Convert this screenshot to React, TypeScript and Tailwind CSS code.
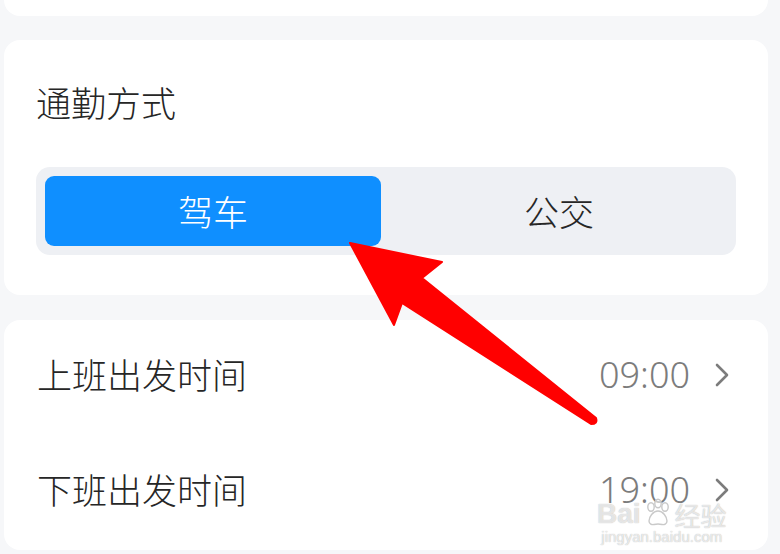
const rows = [
  { label: "上班出发时间", value: "09:00" },
  { label: "下班出发时间", value: "19:00" },
];

const font = "font-['Noto_Sans_CJK_SC','Noto_Sans',sans-serif]";

function Chevron() {
  return (
    <svg className="h-[26px] w-[16px]" viewBox="0 0 16 26" fill="none" stroke="#7c7c7c" strokeWidth={2.6} strokeLinecap="round" strokeLinejoin="round">
      <path d="M3 3l10 10-10 10" />
    </svg>
  );
}

function Paw() {
  return (
    <svg width="30" height="30" viewBox="0 0 30 30" fill="none" stroke="#c9c9c9" strokeWidth={1.4}>
      <ellipse cx="8" cy="9" rx="3.2" ry="4.2" fill="white" fillOpacity={0.6} />
      <ellipse cx="15" cy="5.5" rx="3.2" ry="4.2" fill="white" fillOpacity={0.6} />
      <ellipse cx="22" cy="9" rx="3.2" ry="4.2" fill="white" fillOpacity={0.6} />
      <path d="M15 13c-5 0-9 6-9 10 0 3 3 4 5 3.5 2-.5 6-.5 8 0 2 .5 5-.5 5-3.5 0-4-4-10-9-10z" fill="white" fillOpacity={0.6} />
    </svg>
  );
}

export default function App() {
  return (
    <div className={`relative h-[554px] w-[780px] overflow-hidden bg-[#f6f7f9] pl-[4px] pr-[12px] ${font}`}>
      {/* previous card (cut off) */}
      <div className="h-[16px] rounded-b-[16px] bg-white" />

      {/* commute mode */}
      <section className="mt-[24px] h-[255px] rounded-[16px] bg-white px-[32px] pt-[42px]">
        <h2 className="text-[35px] font-light leading-[40px] text-[#262626]">通勤方式</h2>
        <div className="mt-[45px] grid h-[88px] grid-cols-2 gap-[10px] rounded-[14px] bg-[#eef0f4] p-[9px]">
          <div className="flex items-center justify-center rounded-[9px] bg-[#0f8fff] text-[35px] font-light text-white">
            驾车
          </div>
          <div className="flex items-center justify-center text-[35px] font-light text-[#262626]">公交</div>
        </div>
      </section>

      {/* time rows */}
      <section className="mt-[25px] rounded-[16px] bg-white px-[33px]">
        {rows.map((row) => (
          <div key={row.label} className="flex h-[115px] items-center justify-between pb-[6px]">
            <span className="text-[35px] font-light text-[#262626]">{row.label}</span>
            <span className="flex items-center gap-[24px] pr-[5px]">
              <span className="font-['Noto_Sans',sans-serif] text-[36px] font-light text-[#7c7c7c]">{row.value}</span>
              <Chevron />
            </span>
          </div>
        ))}
      </section>

      {/* red annotation arrow */}
      <svg className="absolute left-0 top-0" width="780" height="554" viewBox="0 0 780 554">
        <path
          d="M350 243 L442 262 L422 278 L596 418 Q598 424 591 424 L402 303 L394 325 Z"
          fill="#ff0000"
          stroke="#ff0000"
          strokeWidth={2}
          strokeLinejoin="round"
        />
      </svg>

      {/* watermark */}
      <div className="pointer-events-none absolute left-[597px] top-[498px] flex flex-col items-center text-white/70 [text-shadow:0_0_1px_#aaa]">
        <div className="flex items-end gap-[2px] leading-none">
          <span className="font-['Liberation_Sans',sans-serif] text-[28px] font-bold">Bai</span>
          <Paw />
          <span className="text-[26px]">经验</span>
        </div>
        <span className="font-['Liberation_Sans',sans-serif] text-[15px] leading-[18px]">jingyan.baidu.com</span>
      </div>
    </div>
  );
}
